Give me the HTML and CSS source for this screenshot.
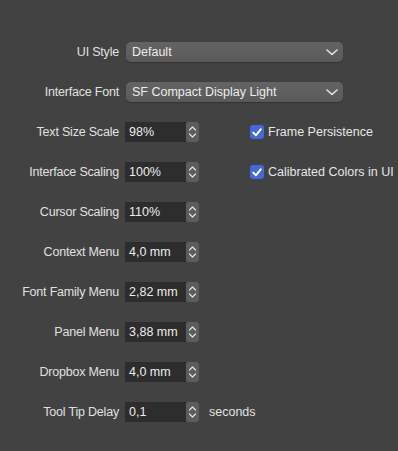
FILE: index.html
```html
<!DOCTYPE html>
<html lang="en">
  <head>
    <meta charset="UTF-8" />
    <title>Interface preferences</title>
    <link rel="stylesheet" href="styles.css">
  </head>
  <body>
    <div class="prefs">
      <div class="row">
        <label class="label">UI Style</label>
        <div class="popup">
          <span>Default</span>
          <svg class="chevron" width="12" height="7" viewBox="0 0 12 7"><path d="M1 1l5 4.5L11 1" /></svg>
        </div>
      </div>

      <div class="row">
        <label class="label">Interface Font</label>
        <div class="popup">
          <span>SF Compact Display Light</span>
          <svg class="chevron" width="12" height="7" viewBox="0 0 12 7"><path d="M1 1l5 4.5L11 1" /></svg>
        </div>
      </div>

      <div class="row">
        <label class="label">Text Size Scale</label>
        <div class="field">98%</div>
        <div class="stepper"><svg width="9" height="14" viewBox="0 0 9 14"><path d="M1.5 5l3-3 3 3M1.5 9l3 3 3-3" /></svg></div>
        <div class="check"><span class="box"><svg width="10" height="9" viewBox="0 0 10 9"><path d="M1.3 4.6l2.6 2.7L8.7 1.3" /></svg></span>Frame Persistence</div>
      </div>

      <div class="row">
        <label class="label">Interface Scaling</label>
        <div class="field">100%</div>
        <div class="stepper"><svg width="9" height="14" viewBox="0 0 9 14"><path d="M1.5 5l3-3 3 3M1.5 9l3 3 3-3" /></svg></div>
        <div class="check"><span class="box"><svg width="10" height="9" viewBox="0 0 10 9"><path d="M1.3 4.6l2.6 2.7L8.7 1.3" /></svg></span>Calibrated Colors in UI</div>
      </div>

      <div class="row">
        <label class="label">Cursor Scaling</label>
        <div class="field">110%</div>
        <div class="stepper"><svg width="9" height="14" viewBox="0 0 9 14"><path d="M1.5 5l3-3 3 3M1.5 9l3 3 3-3" /></svg></div>
      </div>

      <div class="row">
        <label class="label">Context Menu</label>
        <div class="field">4,0 mm</div>
        <div class="stepper"><svg width="9" height="14" viewBox="0 0 9 14"><path d="M1.5 5l3-3 3 3M1.5 9l3 3 3-3" /></svg></div>
      </div>

      <div class="row">
        <label class="label">Font Family Menu</label>
        <div class="field">2,82 mm</div>
        <div class="stepper"><svg width="9" height="14" viewBox="0 0 9 14"><path d="M1.5 5l3-3 3 3M1.5 9l3 3 3-3" /></svg></div>
      </div>

      <div class="row">
        <label class="label">Panel Menu</label>
        <div class="field">3,88 mm</div>
        <div class="stepper"><svg width="9" height="14" viewBox="0 0 9 14"><path d="M1.5 5l3-3 3 3M1.5 9l3 3 3-3" /></svg></div>
      </div>

      <div class="row">
        <label class="label">Dropbox Menu</label>
        <div class="field">4,0 mm</div>
        <div class="stepper"><svg width="9" height="14" viewBox="0 0 9 14"><path d="M1.5 5l3-3 3 3M1.5 9l3 3 3-3" /></svg></div>
      </div>

      <div class="row">
        <label class="label">Tool Tip Delay</label>
        <div class="field">0,1</div>
        <div class="stepper"><svg width="9" height="14" viewBox="0 0 9 14"><path d="M1.5 5l3-3 3 3M1.5 9l3 3 3-3" /></svg></div>
        <span class="unit">seconds</span>
      </div>
    </div>
  </body>
</html>
```

FILE: styles.css
```css
* {
  box-sizing: border-box;
  margin: 0;
  padding: 0;
}
body {
  background: #424242;
  color: #e2e2e2;
  font-family: "Liberation Sans", Arial, sans-serif;
  font-size: 12.5px;
  min-height: 100vh;
  overflow: hidden;
}
.prefs {
  display: flex;
  flex-direction: column;
  gap: 20px;
  padding-top: 42px;
}
.row {
  display: flex;
  align-items: center;
  height: 20px;
  line-height: 20px;
}
.label {
  width: 119px;
  text-align: right;
  margin-right: 6px;
  letter-spacing: -0.2px;
  color: #e0e0e0;
}
.popup {
  display: flex;
  align-items: center;
  justify-content: space-between;
  width: 217px;
  height: 20px;
  margin-left: 1px;
  padding: 0 5px 0 6px;
  border-radius: 5px;
  background: linear-gradient(#646464, #5a5a5a);
  box-shadow: 0 0.5px 1px rgba(0, 0, 0, 0.25);
  color: #ececec;
}
.chevron path,
.stepper path,
.box path {
  fill: none;
  stroke-linecap: round;
  stroke-linejoin: round;
}
.chevron path {
  stroke: #e4e4e4;
  stroke-width: 1.6;
}
.field {
  width: 61px;
  height: 20px;
  padding-left: 4px;
  background: #2d2d2d;
  color: #ececec;
}
.stepper {
  display: flex;
  align-items: center;
  justify-content: center;
  width: 13px;
  height: 20px;
  border-radius: 3px;
  background: #5c5c5c;
}
.stepper path {
  stroke: #e0e0e0;
  stroke-width: 1.2;
}
.check {
  display: flex;
  align-items: center;
  margin-left: 51px;
  color: #e6e6e6;
  white-space: nowrap;
}
.box {
  display: flex;
  align-items: center;
  justify-content: center;
  width: 14px;
  height: 14px;
  margin-right: 4px;
  border-radius: 3px;
  background: #4468dc;
}
.box path {
  stroke: #fff;
  stroke-width: 2;
}
.unit {
  margin-left: 10px;
  color: #e2e2e2;
}
```
